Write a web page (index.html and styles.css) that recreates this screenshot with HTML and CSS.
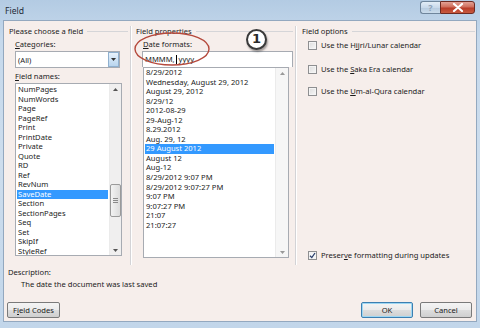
FILE: index.html
```html
<html>
<head>
<meta content="text/html;charset=utf-8" http-equiv="Content-Type" />
<link rel="stylesheet" href="styles.css">
</head>
<body>
<div class="window">
	<div class="titlebar">
		<span class="title">Field</span>
		<div class="caption-btns">
			<span class="cbtn help">?</span>
			<span class="cbtn close">
				<svg width="12" height="9" viewBox="0 0 12 9"><path d="M2 1 L10 8 M10 1 L2 8" stroke="#fff" stroke-width="2.2" stroke-linecap="round"/></svg>
			</span>
		</div>
	</div>
	<div class="client">
		<div class="panes">
			<section class="pane pane-left">
				<div class="group-head">Please choose a field</div>
				<div class="label"><u>C</u>ategories:</div>
				<div class="combo">
					<span class="combo-text">(All)</span>
					<span class="combo-drop"><svg width="5" height="3" viewBox="0 0 5 3"><path d="M0 0 H5 L2.5 3 Z" fill="#333"/></svg></span>
				</div>
				<div class="label"><u>F</u>ield names:</div>
				<div class="listbox names">
					<ul class="items">
						<li>NumPages</li>
						<li>NumWords</li>
						<li>Page</li>
						<li>PageRef</li>
						<li>Print</li>
						<li>PrintDate</li>
						<li>Private</li>
						<li>Quote</li>
						<li>RD</li>
						<li>Ref</li>
						<li>RevNum</li>
						<li class="sel">SaveDate</li>
						<li>Section</li>
						<li>SectionPages</li>
						<li>Seq</li>
						<li>Set</li>
						<li>SkipIf</li>
						<li>StyleRef</li>
					</ul>
					<div class="vscroll">
						<span class="arrow"><svg width="5" height="3" viewBox="0 0 5 3"><path d="M0 3 H5 L2.5 0 Z" fill="#555"/></svg></span>
						<span class="track"><span class="thumb"><i></i><i></i><i></i></span></span>
						<span class="arrow"><svg width="5" height="3" viewBox="0 0 5 3"><path d="M0 0 H5 L2.5 3 Z" fill="#555"/></svg></span>
					</div>
				</div>
			</section>
			<section class="pane pane-mid">
				<div class="group-head">Field properties</div>
				<div class="label indent"><u>D</u>ate formats:</div>
				<div class="textbox"><span>MMMM,<span class="caret"></span> yyyy</span></div>
				<div class="listbox dates">
					<ul class="items">
						<li>8/29/2012</li>
						<li>Wednesday, August 29, 2012</li>
						<li>August 29, 2012</li>
						<li>8/29/12</li>
						<li>2012-08-29</li>
						<li>29-Aug-12</li>
						<li>8.29.2012</li>
						<li>Aug. 29, 12</li>
						<li class="sel">29 August 2012</li>
						<li>August 12</li>
						<li>Aug-12</li>
						<li>8/29/2012 9:07 PM</li>
						<li>8/29/2012 9:07:27 PM</li>
						<li>9:07 PM</li>
						<li>9:07:27 PM</li>
						<li>21:07</li>
						<li>21:07:27</li>
					</ul>
					<div class="vscroll light">
						<span class="arrow"><svg width="5" height="3" viewBox="0 0 5 3"><path d="M0 3 H5 L2.5 0 Z" fill="#999"/></svg></span>
						<span class="track"></span>
						<span class="arrow"><svg width="5" height="3" viewBox="0 0 5 3"><path d="M0 0 H5 L2.5 3 Z" fill="#999"/></svg></span>
					</div>
				</div>
			</section>
			<section class="pane pane-right">
				<div class="group-head">Field options</div>
				<div class="check first"><span class="box"></span><span>Use the H<u>i</u>jri/Lunar calendar</span></div>
				<div class="check second"><span class="box"></span><span>Use the <u>S</u>aka Era calendar</span></div>
				<div class="check third"><span class="box"></span><span>Use the <u>U</u>m-al-Qura calendar</span></div>
				<div class="check preserve"><span class="box checked"><svg width="7" height="7" viewBox="0 0 7 7"><path d="M1 3.8 L2.8 5.6 L6 1" fill="none" stroke="#2a3f6b" stroke-width="1.3"/></svg></span><span>Preser<u>v</u>e formatting during updates</span></div>
			</section>
		</div>
		<div class="desc">
			<div class="desc-label">Description:</div>
			<div class="desc-text">The date the document was last saved</div>
		</div>
		<div class="actions">
			<button class="btn">F<u>i</u>eld Codes</button>
			<span class="spacer"></span>
			<button class="btn default">OK</button>
			<button class="btn">Cancel</button>
		</div>
	</div>
	<!-- annotations drawn on top of the dialog -->
	<svg class="note-ellipse" width="78" height="36" viewBox="0 0 78 36"><ellipse cx="39" cy="18" rx="37" ry="16" fill="none" stroke="#b5493c" stroke-width="1.4"/></svg>
	<div class="note-num">1</div>
</div>
</body>
</html>
```

FILE: styles.css
```css
body {
	margin: 0;
	padding: 0;
	background: #fff;
	font-family: "Noto Sans", "Open Sans", sans-serif;
	font-size: 7.6px;
	color: #1b1b1b;
}

.window {
	position: relative;
	width: 480px;
	height: 328px;
	box-sizing: border-box;
	padding: 0 3px 5px 3px;
	background: linear-gradient(180deg, #b3cbe3 0%, #c6d9ec 12%, #cddded 50%, #c2d6ea 100%);
	overflow: hidden;
}

.titlebar {
	height: 20px;
	display: flex;
	align-items: flex-start;
}
.title {
	margin: 6px 0 0 2px;
	font-size: 8.6px;
	color: #1e2a38;
	line-height: 10px;
}
.caption-btns {
	margin-left: auto;
	margin-top: 1px;
	margin-right: 2px;
	display: flex;
}
.cbtn {
	height: 13px;
	box-sizing: border-box;
	display: flex;
	align-items: center;
	justify-content: center;
	border: 1px solid #6f859c;
}
.help {
	width: 20px;
	border-right: 0;
	border-radius: 3px 0 0 3px;
	background: linear-gradient(180deg, #e3edf7 0%, #c9d9ea 50%, #b5c9de 51%, #cbdcec 100%);
	color: #8da2b8;
	font-size: 9px;
	font-weight: bold;
}
.close {
	width: 35px;
	border-color: #6d2a22;
	border-radius: 0 3px 3px 0;
	background: linear-gradient(180deg, #e3a195 0%, #cf6e5c 45%, #b83c29 55%, #c85a3f 100%);
}

.client {
	height: 302px;
	box-sizing: border-box;
	border: 1px solid #93a8bf;
	background: #f6eeeb;
	display: flex;
	flex-direction: column;
}

.panes {
	margin-top: 5px;
	height: 239px;
	display: grid;
	grid-template-columns: 127px 165px 1fr;
}
.pane {
	display: flex;
	flex-direction: column;
	border-right: 1px solid #d3d3d6;
	box-shadow: 1px 0 0 #fff;
	min-width: 0;
}
.pane-right {
	border-right: 0;
	box-shadow: none;
	padding-left: 6px;
	padding-right: 1px;
	padding-bottom: 5px;
}
.pane-left {
	padding-left: 5px;
	padding-right: 2px;
}
.pane-mid {
	padding-left: 5px;
	padding-right: 2px;
}

.group-head {
	line-height: 10px;
	height: 10px;
	display: flex;
	align-items: center;
	gap: 4px;
	white-space: nowrap;
}
.group-head::after {
	content: "";
	flex: 1;
	border-top: 1px solid #d5d5d8;
	margin-top: 1px;
}

.label {
	margin: 3px 0 0 6px;
	line-height: 10px;
}
.label.indent {
	margin-left: 7px;
}

.combo {
	margin: 2px 0 0 6px;
	width: 105px;
	height: 17px;
	box-sizing: border-box;
	border: 1px solid #a7abb2;
	background: #fff;
	display: flex;
	align-items: center;
}
.combo-text {
	padding-left: 2px;
	flex: 1;
}
.combo-drop {
	width: 11px;
	height: 15px;
	box-sizing: border-box;
	border: 1px solid #8fb0cf;
	background: linear-gradient(180deg, #e8f2fb 0%, #cfe3f5 50%, #b9d5ee 100%);
	display: flex;
	align-items: center;
	justify-content: center;
}

.listbox {
	box-sizing: border-box;
	border: 1px solid #a7abb2;
	background: #fff;
	display: flex;
	overflow: hidden;
}
.listbox.names {
	margin: 2px 0 0 6px;
	width: 107px;
	height: 173px;
}
.listbox.dates {
	margin: 0 0 0 7px;
	width: 146px;
	height: 191px;
}
.items {
	list-style: none;
	margin: 0;
	padding: 1px 1px 0 1px;
	flex: 1;
	min-width: 0;
}
.dates .items {
	padding-top: 0;
}
.items li {
	line-height: 9.5px;
	height: 9.5px;
	padding-left: 1px;
	white-space: nowrap;
}
.dates .items li {
	line-height: 9.55px;
	height: 9.55px;
}
.items li.sel {
	background: #3399ff;
	color: #fff;
}

.vscroll {
	width: 11px;
	display: flex;
	flex-direction: column;
	background: #f0efef;
	border-left: 1px solid #ebebeb;
}
.vscroll .arrow {
	height: 10px;
	display: flex;
	align-items: center;
	justify-content: center;
}
.vscroll .track {
	flex: 1;
	display: flex;
	flex-direction: column;
}
.thumb {
	margin: 90px 0 0 0;
	height: 33px;
	box-sizing: border-box;
	border: 1px solid #9a9a9a;
	border-radius: 2px;
	background: linear-gradient(90deg, #f3f3f3, #dcdcdc);
	display: flex;
	flex-direction: column;
	align-items: center;
	justify-content: center;
	gap: 1px;
}
.thumb i {
	width: 5px;
	height: 1px;
	background: #8a8a8a;
}
.vscroll.light {
	background: #f6f6f6;
	width: 12px;
}

.textbox {
	margin: 2px 0 0 6px;
	width: 151px;
	height: 16px;
	box-sizing: border-box;
	border: 1px solid #a7abb2;
	border-bottom: 0;
	background: #fff;
	padding-left: 2px;
	line-height: 15px;
	white-space: pre;
}
.caret {
	display: inline-block;
	width: 1px;
	height: 9px;
	margin-left: 1px;
	vertical-align: -2px;
	background: #000;
}

.check {
	margin-left: 6px;
	display: flex;
	align-items: center;
	gap: 4px;
	line-height: 10px;
	white-space: nowrap;
}
.check.first { margin-top: 4px; }
.check.second { margin-top: 14px; }
.check.third { margin-top: 12px; }
.check.preserve { margin-top: auto; }
.box {
	width: 9px;
	height: 9px;
	box-sizing: border-box;
	border: 1px solid #8e8f91;
	background: linear-gradient(135deg, #dcdcdc, #f8f8f8);
	box-shadow: inset 0 0 0 1px #f4f4f4;
	display: flex;
	align-items: center;
	justify-content: center;
}
.box.checked {
	background: #f4f6f8;
}

.desc {
	margin: 2px 0 0 4px;
	line-height: 10px;
}
.desc-text {
	margin: 2px 0 0 13px;
}

.actions {
	margin-top: 13px;
	display: flex;
	padding: 0 4px 0 3px;
	gap: 7px;
}
.spacer {
	flex: 1;
}
.btn {
	height: 16px;
	width: 52px;
	padding: 0;
	box-sizing: border-box;
	border: 1px solid #7a7a7a;
	border-radius: 2px;
	background: linear-gradient(180deg, #f4f4f4 0%, #ebebeb 48%, #dddddd 52%, #cfcfcf 100%);
	font-family: inherit;
	font-size: 7.6px;
	color: #1b1b1b;
}
.btn:first-child {
	width: 53px;
}
.btn.default {
	border-color: #3c7fb1;
	box-shadow: inset 0 0 0 1px #9ed7f3;
}

.note-ellipse {
	position: absolute;
	left: 133px;
	top: 31px;
}
.note-num {
	position: absolute;
	left: 246px;
	top: 29px;
	width: 21px;
	height: 21px;
	box-sizing: border-box;
	border: 2.5px solid #3a3a3a;
	border-radius: 50%;
	background: #fff;
	box-shadow: 1px 2px 2px rgba(0,0,0,0.35);
	font-family: "DejaVu Sans", sans-serif;
	font-weight: bold;
	font-size: 13px;
	line-height: 16px;
	text-align: center;
	color: #2a2a2a;
}
```
